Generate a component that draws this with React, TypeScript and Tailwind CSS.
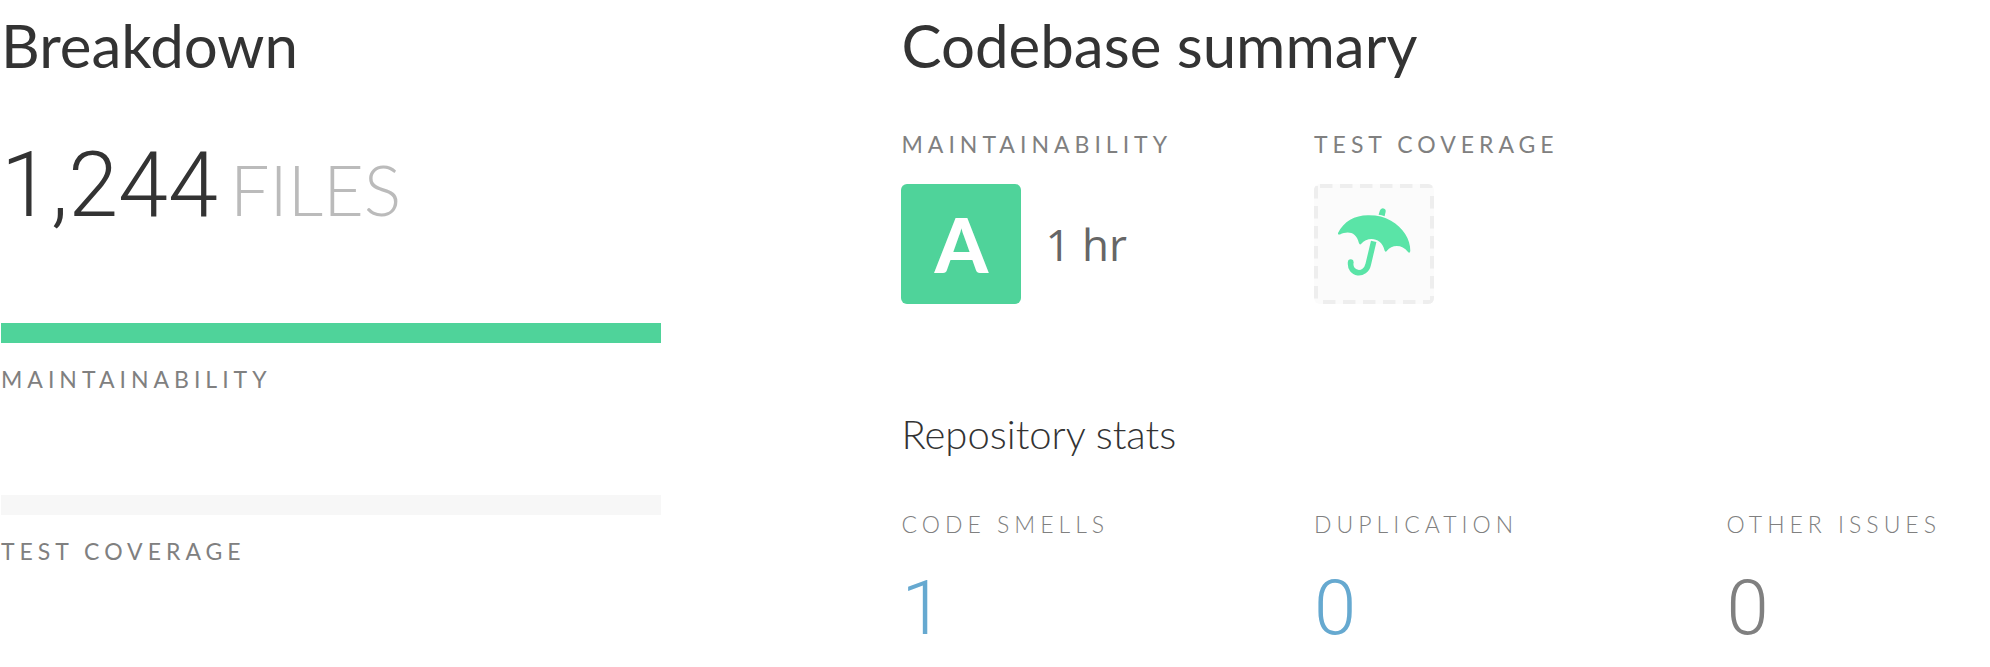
import React from "react";

function Label({ children, light = false }: { children: React.ReactNode; light?: boolean }) {
  return (
    <h3 className={`text-[23px] leading-8 tracking-[5px] whitespace-nowrap uppercase text-[#808080] ${light ? "font-light" : "font-normal"}`}>
      {children}
    </h3>
  );
}

function Bar({ label, color }: { label: string; color: string }) {
  return (
    <div>
      <div className={`h-5 ${color}`} />
      <div className="pt-5">
        <Label>{label}</Label>
      </div>
    </div>
  );
}

function UmbrellaTile() {
  return (
    <svg viewBox="0 0 120 120" className="size-[120px] rounded-md bg-[#fbfbfb]" role="img" aria-label="No coverage">
      <g stroke="#eee" strokeWidth="4" strokeDasharray="12.500 7.500" fill="none">
        <path d="M6 2H120" />
        <path d="M2 2V118" />
        <path d="M118 12V120" />
        <path d="M9 118H120" />
      </g>
      <g fill="#5ae4a7">
        <path d="M64.600 30.800 L65.800 26.800 Q66.800 23.800 69.600 24.400 Q72.300 25.200 71.600 28 L70.600 32.200 Q67.500 31.200 64.600 30.800 Z" />
        <path d="M24 49 C29.500 37.500 41 31.200 53.700 31.200 C63 31 70 32.800 77 36.700 C89 43.500 96.500 55 96.300 67 Q95.800 70 93.800 67.800 C88.500 60 77.500 60.300 73 66.800 Q71.300 68.800 70.500 66.300 C67.500 52.500 53 52.500 47.300 59.800 Q45.700 61.500 44.900 59 C42.500 48 34 46.500 26 50.400 Q23.500 51.200 24 49 Z" />
      </g>
      <path d="M59.700 57.300 L54.200 80.500 C51.500 92.500 35 91 36.700 78" fill="none" stroke="#5ae4a7" strokeWidth="5.600" />
      <circle cx="36.700" cy="78" r="2.800" fill="#5ae4a7" />
    </svg>
  );
}

function Stat({ label, value, color }: { label: string; value: string; color: string }) {
  return (
    <div>
      <Label light>{label}</Label>
      <p className={`pt-[18px] font-['Roboto',sans-serif] text-[76px] leading-[100px] font-light ${color}`}>{value}</p>
    </div>
  );
}

export default function App() {
  return (
    <main className="flex bg-white pt-1.5 font-['Lato',sans-serif] text-[#333]">
      <section className="w-[45.3%] shrink-0 pl-px">
        <h2 className="text-[60px] leading-[78px]">Breakdown</h2>
        <p className="flex items-baseline gap-3 pt-[52px] text-[90px] leading-[100px] font-light whitespace-nowrap">
          <span className="font-['Roboto',sans-serif]">1,244</span>
          <span className="text-[70px] text-[#bbb]">FILES</span>
        </p>
        <div className="flex w-[73.3%] flex-col gap-[100px] pt-[84px]">
          <Bar label="Maintainability" color="bg-[#4fd39a]" />
          <Bar label="Test coverage" color="bg-[#f7f7f7]" />
        </div>
      </section>

      <section className="min-w-0 flex-1">
        <h2 className="text-[60px] leading-[78px]">Codebase summary</h2>
        <div className="grid grid-cols-[37.9%_37.9%_1fr] pt-11">
          <div>
            <Label>Maintainability</Label>
            <div className="flex items-center gap-6 pt-6">
              <div className="flex size-[120px] items-center justify-center rounded-md bg-[#4fd39a] text-[76px] leading-none font-black text-white">
                A
              </div>
              <span className="font-['Open_Sans',sans-serif] text-[44px] text-[#666]">1 hr</span>
            </div>
          </div>
          <div>
            <Label>Test coverage</Label>
            <div className="pt-6">
              <UmbrellaTile />
            </div>
          </div>
        </div>

        <h2 className="pt-[102px] text-[40px] leading-[56px] font-light">Repository stats</h2>
        <div className="grid grid-cols-[37.9%_37.9%_1fr] pt-[46px]">
          <Stat label="Code smells" value="1" color="text-[#66a9d0]" />
          <Stat label="Duplication" value="0" color="text-[#66a9d0]" />
          <Stat label="Other issues" value="0" color="text-[#808080]" />
        </div>
      </section>
    </main>
  );
}
